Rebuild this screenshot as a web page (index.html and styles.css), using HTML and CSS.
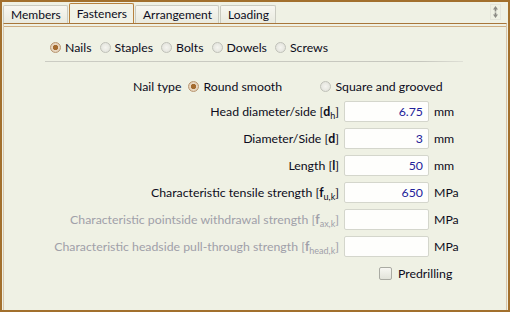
FILE: index.html
```html
<!DOCTYPE html>
<html lang="en">
<head>
    <meta charset="UTF-8">
    <title>Fasteners</title>
    <link rel="stylesheet" href="styles.css">
</head>
<body>
    <div class="window">
        <!-- Tab strip -->
        <div class="tabs">
            <div class="tab">Members</div>
            <div class="tab active">Fasteners</div>
            <div class="tab">Arrangement</div>
            <div class="tab">Loading</div>
            <div class="pin">
                <svg width="9" height="14" viewBox="0 0 9 14">
                    <path d="M4.5 1 L7 4.5 H5.3 V6.5 H3.7 V4.5 H2 Z" fill="#8c8c86"/>
                    <path d="M4.5 13 L7 9.5 H5.3 V7.5 H3.7 V9.5 H2 Z" fill="#8c8c86"/>
                </svg>
            </div>
        </div>

        <!-- Fasteners page -->
        <div class="panel">
            <div class="types">
                <span class="radio checked"><span class="dot"></span>Nails</span>
                <span class="radio"><span class="dot"></span>Staples</span>
                <span class="radio"><span class="dot"></span>Bolts</span>
                <span class="radio"><span class="dot"></span>Dowels</span>
                <span class="radio"><span class="dot"></span>Screws</span>
            </div>
            <div class="sep"></div>

            <div class="nailtype">
                <span class="nt-label">Nail type</span>
                <span class="radio checked first"><span class="dot"></span>Round smooth</span>
                <span class="radio"><span class="dot"></span>Square and grooved</span>
            </div>

            <div class="fields">
                <div class="lbl">Head diameter/side [<b>d</b><sub>h</sub>]</div>
                <div class="input">6.75</div>
                <div class="unit">mm</div>

                <div class="lbl">Diameter/Side [<b>d</b>]</div>
                <div class="input">3</div>
                <div class="unit">mm</div>

                <div class="lbl">Length [<b>l</b>]</div>
                <div class="input">50</div>
                <div class="unit">mm</div>

                <div class="lbl">Characteristic tensile strength [<b>f</b><sub>u,k</sub>]</div>
                <div class="input">650</div>
                <div class="unit">MPa</div>

                <div class="lbl disabled">Characteristic pointside withdrawal strength [<b>f</b><sub>ax,k</sub>]</div>
                <div class="input"></div>
                <div class="unit">MPa</div>

                <div class="lbl disabled">Characteristic headside pull-through strength [<b>f</b><sub>head,k</sub>]</div>
                <div class="input"></div>
                <div class="unit">MPa</div>

                <div class="check"><span class="box"></span>Predrilling</div>
            </div>
        </div>
    </div>
</body>
</html>
```

FILE: styles.css
```css
/* General */
body {
    margin: 0;
    font-family: "Lato", "Noto Sans", sans-serif;
    font-size: 12.3px;
    color: #0c0c20;
}

.window {
    width: 510px;
    height: 312px;
    box-sizing: border-box;
    border: 2px solid #a2702d;
    background-color: #eff1e4;
    display: flex;
    flex-direction: column;
}

/* Tabs */
.tabs {
    display: flex;
    align-items: flex-end;
    height: 21px;
    padding-left: 1px;
}

.tab {
    height: 18px;
    box-sizing: border-box;
    padding: 0 6px 0 7px;
    margin-right: 1px;
    font-size: 12px;
    line-height: 17px;
    border: 1px solid #cacbc1;
    border-bottom: none;
    border-radius: 2px 2px 0 0;
    background: linear-gradient(#f7f7f1, #e9eadf);
}

.tab.active {
    height: 20px;
    line-height: 19px;
    border-color: #b7823f;
    background: #f1f2e7;
}

.pin {
    margin-left: auto;
    margin-right: 7px;
    align-self: flex-start;
    margin-top: 2px;
    width: 9px;
    height: 14px;
    border: 1px solid #e4e5da;
}

/* Page panel */
.panel {
    flex: 1;
    margin: 0 1px;
    border: 1px solid #d8c6aa;
    border-top: 1px solid #a8763a;
    border-bottom: none;
    box-shadow: inset 0 2px 0 #eff1e4, inset 0 3px 0 #cfae82;
}

/* Radio buttons */
.radio {
    display: inline-flex;
    align-items: center;
    white-space: nowrap;
}

.dot {
    width: 11px;
    height: 11px;
    box-sizing: border-box;
    border-radius: 50%;
    border: 1px solid #c0c1b9;
    background: radial-gradient(circle, #f5f5f0, #dedfd7);
    margin-right: 4px;
}

.radio.checked .dot {
    border-color: #b99671;
    background: radial-gradient(circle, #a46b2f 0, #a46b2f 2.3px, #ead9c4 3px, #d8c2a4 100%);
}

.types {
    display: flex;
    gap: 8px;
    height: 16px;
    margin: 15px 0 0 46px;
}

.sep {
    height: 1px;
    margin: 6px 0 0 41px;
    width: 418px;
    background: linear-gradient(to right, #cbccc3, #c6c7be 90%, #dfe0d6);
}

.nailtype {
    display: flex;
    align-items: center;
    height: 16px;
    margin: 16px 0 0 129px;
}

.nt-label {
    margin-right: 7px;
}

.nailtype .first {
    width: 132px;
}

/* Input rows */
.fields {
    display: grid;
    grid-template-columns: 335px 85px auto;
    grid-auto-rows: 21px;
    column-gap: 5px;
    row-gap: 6px;
    margin-top: 7px;
    align-items: center;
}

.lbl {
    text-align: right;
    white-space: nowrap;
}

.lbl.disabled {
    color: #9fa0a9;
}

sub {
    font-size: 9px;
    vertical-align: -3px;
    line-height: 0;
}

.input {
    height: 21px;
    box-sizing: border-box;
    border: 1px solid #d4d6cc;
    border-radius: 2px;
    background: #fefefc;
    text-align: right;
    padding-right: 5px;
    line-height: 19px;
    color: #22229a;
}

.check {
    grid-column: 2 / 4;
    display: flex;
    align-items: center;
    padding-left: 35px;
}

.box {
    width: 13px;
    height: 13px;
    box-sizing: border-box;
    border: 1px solid #aaaba3;
    border-radius: 2px;
    background: linear-gradient(#f7f7f2, #e2e3da);
    margin-right: 6px;
}
```
